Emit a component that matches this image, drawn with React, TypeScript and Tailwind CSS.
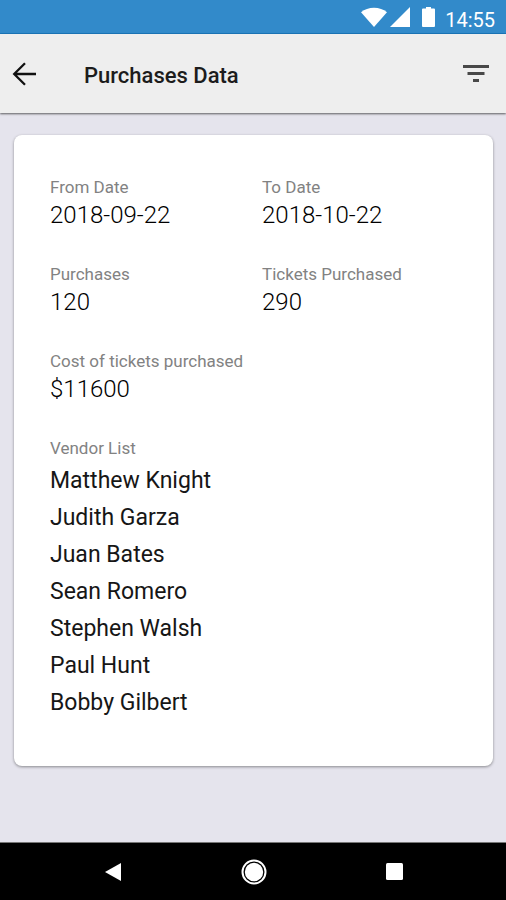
import React from "react";

const vendors = [
  "Matthew Knight",
  "Judith Garza",
  "Juan Bates",
  "Sean Romero",
  "Stephen Walsh",
  "Paul Hunt",
  "Bobby Gilbert",
];

const figures = [
  { label: "From Date", value: "2018-09-22" },
  { label: "To Date", value: "2018-10-22" },
  { label: "Purchases", value: "120" },
  { label: "Tickets Purchased", value: "290" },
  { label: "Cost of tickets purchased", value: "$11600" },
];

function StatusBar() {
  return (
    <div className="flex h-[34px] items-center justify-end border-b border-[#1b78bc] bg-[#328aca] pt-px pr-[11px] text-white">
      <svg className="h-5 w-[26px]" viewBox="0 0 26 20" fill="currentColor" aria-hidden="true">
        <path d="M0 5.2C3.500 2.200 8 .7 13 .7s9.500 1.500 13 4.500L13 20z" />
      </svg>
      <svg className="ml-[3px] h-5 w-5" viewBox="0 0 20 20" fill="currentColor" aria-hidden="true">
        <path d="M20 0v20H0z" />
      </svg>
      <svg className="ml-3 h-5 w-[13px]" viewBox="0 0 13 20" fill="currentColor" aria-hidden="true">
        <path d="M4 0h5v1.500h3q1 0 1 1V19q0 1-1 1H1q-1 0-1-1V2.500q0-1 1-1h3z" />
      </svg>
      <span className="ml-[10px] pt-[6px] text-[20px] leading-6">14:55</span>
    </div>
  );
}

function AppBar() {
  return (
    <header className="z-10 flex h-[79px] items-center bg-[#eeeeee] px-3 shadow-[0_1px_2px_rgba(0,0,0,0.6)]">
      <button type="button" aria-label="Back" className="text-[#111111]">
        <svg className="h-6 w-6" viewBox="0 0 24 24" fill="none" stroke="currentColor" strokeWidth="2.3" aria-hidden="true">
          <path d="M24 12H3M13 1.200L2.200 12 13 22.800" />
        </svg>
      </button>
      <h1 className="ml-12 flex-1 pt-1 text-[22px] leading-7 font-medium text-[#1c1c1c]">
        Purchases Data
      </h1>
      <button type="button" aria-label="Filter" className="mr-[5px] text-[#484848]">
        <svg className="h-[18px] w-[26px]" viewBox="0 0 26 18" fill="currentColor" aria-hidden="true">
          <path d="M0 0h26v3H0zM4.500 7h17v3h-17zM10 14h6v3h-6z" />
        </svg>
      </button>
    </header>
  );
}

function NavBar() {
  return (
    <nav className="grid h-[58px] grid-cols-3 items-center border-t border-[#777777] bg-black pr-[41px] pl-[43px] text-white">
      <button type="button" aria-label="Back" className="flex justify-center">
        <svg className="h-[18px] w-4" viewBox="0 0 16 18" fill="currentColor" aria-hidden="true">
          <path d="M16 0v18L0 9z" />
        </svg>
      </button>
      <button type="button" aria-label="Home" className="flex justify-center">
        <svg className="h-[26px] w-[26px]" viewBox="0 0 26 26" aria-hidden="true">
          <circle cx="13" cy="13" r="11.500" fill="none" stroke="currentColor" strokeWidth="2" />
          <circle cx="13" cy="13" r="9.200" fill="currentColor" />
        </svg>
      </button>
      <button type="button" aria-label="Recent apps" className="flex justify-center">
        <svg className="h-[17px] w-[17px]" viewBox="0 0 17 17" fill="currentColor" aria-hidden="true">
          <rect width="17" height="17" rx="1.500" />
        </svg>
      </button>
    </nav>
  );
}

export default function App() {
  return (
    <div className="flex min-h-screen flex-col bg-[#e5e4ed] font-['Roboto',sans-serif]">
      <StatusBar />
      <AppBar />
      <main className="flex-1 pt-[22px] pr-[13px] pb-6 pl-[14px]">
        <section className="rounded-lg bg-white px-9 pt-[42px] pb-[45px] shadow-[0_1px_3px_rgba(0,0,0,0.4)]">
          <dl className="grid grid-cols-[212px_1fr] gap-y-[31px]">
            {figures.map((f) => (
              <div key={f.label} className="whitespace-nowrap">
                <dt className="text-[17px] leading-5 text-[#828282]">{f.label}</dt>
                <dd className="text-[24px] leading-9 font-light text-black">{f.value}</dd>
              </div>
            ))}
          </dl>
          <h2 className="mt-[31px] text-[17px] leading-5 text-[#828282]">Vendor List</h2>
          <ul className="mt-1">
            {vendors.map((name) => (
              <li key={name} className="text-[23px] leading-[37px] text-[#161616]">
                {name}
              </li>
            ))}
          </ul>
        </section>
      </main>
      <NavBar />
    </div>
  );
}
